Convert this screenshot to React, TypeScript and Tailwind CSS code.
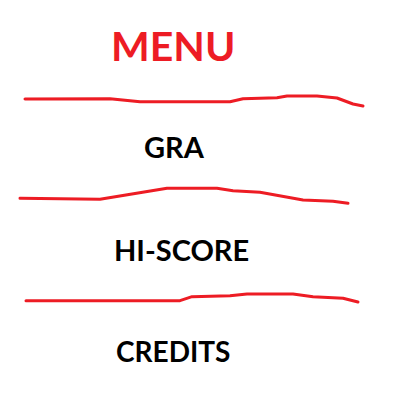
const RED = '#ed1c24'

function Scribble({ points, height }: { points: string; height: number }) {
  return (
    <svg width={400} height={height} viewBox={`0 0 400 ${height}`} className="block shrink-0">
      <polyline
        points={points}
        fill="none"
        stroke={RED}
        strokeWidth={3}
        strokeLinecap="round"
        strokeLinejoin="round"
      />
    </svg>
  )
}

export default function App() {
  return (
    <div className="flex h-[400px] w-[400px] flex-col overflow-hidden bg-white font-['Lato',sans-serif] font-bold">
      <div className="mt-[25px] h-[41px] pl-[111px] text-[41px] leading-none text-[#ed1c24]">MENU</div>
      <div className="mt-[24px]">
        <Scribble height={20} points="25,9 110,8.7 140,11.7 230,11.7 243,8.7 277,7.7 287,6 317,6 337,8 353,14 363,16" />
      </div>
      <div className="mt-[22px] h-[29px] pl-[144px] text-[29px] leading-none text-black">GRA</div>
      <div className="mt-[23px]">
        <Scribble height={24} points="20,14.3 100,15.3 167,4.3 217,4.3 233,6.7 260,8.3 303,16 333,17.3 348,19.3" />
      </div>
      <div className="mt-[27px] h-[29px] pl-[114px] text-[29px] leading-none text-black">HI-SCORE</div>
      <div className="mt-[24px]">
        <Scribble height={20} points="26,12.7 180,12.7 192,8.7 230,7.7 247,6 293,6 313,8.7 343,10.3 358,14" />
      </div>
      <div className="mt-[29px] h-[28px] pl-[116px] text-[28px] leading-none text-black">CREDITS</div>
    </div>
  )
}
